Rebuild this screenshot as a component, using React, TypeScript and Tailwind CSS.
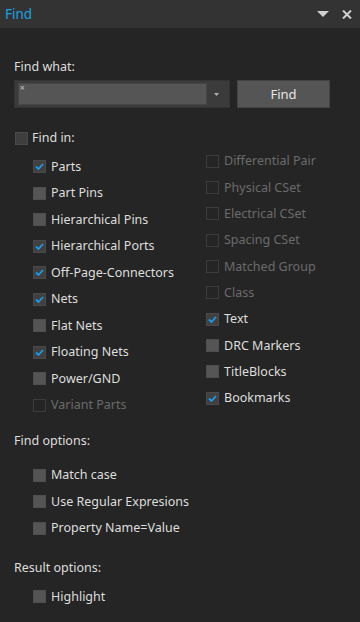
import React from "react";

type State = "on" | "off" | "dis" | "mixed";

function Box({ s }: { s: State }) {
  if (s === "dis")
    return <div className="w-[13px] h-[13px] shrink-0 border border-[#3c3c3c]" />;
  if (s === "mixed")
    return <div className="w-[13px] h-[13px] shrink-0 border border-[#4a4a4a] bg-[#3e3e3e]" />;
  if (s === "off")
    return <div className="w-[13px] h-[13px] shrink-0 border border-[#4e4e4e] bg-[#555555]" />;
  return (
    <div className="w-[13px] h-[13px] shrink-0 border border-[#4a4a4a] bg-[#404040] flex items-center justify-center">
      <svg width="11" height="11" viewBox="0 0 11 11">
        <polyline points="2,5.5 4.5,8 9,3" fill="none" stroke="#1e9be8" strokeWidth="1.8" />
      </svg>
    </div>
  );
}

function Row({ label, s, h = "h-[26.5px]" }: { label: string; s: State; h?: string }) {
  return (
    <div className={`${h} flex items-center gap-[5px]`}>
      <Box s={s} />
      <span className={s === "dis" ? "text-[#6b6b6b]" : "text-[#dedede]"}>{label}</span>
    </div>
  );
}

const left: [string, State][] = [
  ["Parts", "on"],
  ["Part Pins", "off"],
  ["Hierarchical Pins", "off"],
  ["Hierarchical Ports", "on"],
  ["Off-Page-Connectors", "on"],
  ["Nets", "on"],
  ["Flat Nets", "off"],
  ["Floating Nets", "on"],
  ["Power/GND", "off"],
  ["Variant Parts", "dis"],
];

const right: [string, State][] = [
  ["Differential Pair", "dis"],
  ["Physical CSet", "dis"],
  ["Electrical CSet", "dis"],
  ["Spacing CSet", "dis"],
  ["Matched Group", "dis"],
  ["Class", "dis"],
  ["Text", "on"],
  ["DRC Markers", "off"],
  ["TitleBlocks", "off"],
  ["Bookmarks", "on"],
];

export default function App() {
  return (
    <div
      className="w-[360px] h-[622px] bg-[#252525] flex flex-col text-[12.5px] leading-[16px] overflow-hidden"
      style={{ fontFamily: '"Noto Sans", "Open Sans", sans-serif' }}
    >
      <div className="h-[28px] shrink-0 bg-[#333333] flex items-center justify-between pl-[5px] pr-[8px]">
        <span className="text-[13.5px] text-[#1ba1e2]">Find</span>
        <div className="flex items-center gap-[13px]">
          <svg width="12" height="6" viewBox="0 0 12 6">
            <polygon points="0,0 12,0 6,6" fill="#d0d0d0" />
          </svg>
          <svg width="10" height="9" viewBox="0 0 10 9">
            <path d="M1 0.5 L9 8.5 M9 0.5 L1 8.5" stroke="#d0d0d0" strokeWidth="2" />
          </svg>
        </div>
      </div>

      <div className="flex flex-col pl-[14px]">
        <div className="mt-[31px] h-[16px] text-[#dedede]">Find what:</div>

        <div className="mt-[5px] flex gap-[7px]">
          <div className="w-[216px] h-[28px] bg-[#3b3b3b] border border-[#333333] flex items-center pl-[3px] pr-[3px]">
            <div className="w-[189px] h-[22px] bg-[#555555] border border-[#464646] relative">
              <span className="absolute left-[1px] top-[-4px] text-[8px] text-[#cfcfcf]">×</span>
            </div>
            <div className="flex-1 flex justify-center">
              <svg width="5" height="3" viewBox="0 0 5 3">
                <polygon points="0,0 5,0 2.5,3" fill="#b0b0b0" />
              </svg>
            </div>
          </div>
          <div className="w-[93px] h-[28px] bg-[#555555] border border-[#444444] flex items-center justify-center text-[13px] text-[#e6e6e6]">
            Find
          </div>
        </div>

        <div className="mt-[22px] h-[16px] flex items-center gap-[4px] pl-[1px]">
          <Box s="mixed" />
          <span className="text-[#dedede]">Find in:</span>
        </div>

        <div className="flex pl-[19px]">
          <div className="w-[173px] flex flex-col pt-[7.5px]">
            {left.map(([l, s]) => (
              <Row key={l} label={l} s={s} />
            ))}
          </div>
          <div className="flex flex-col pt-[2px]">
            {right.map(([l, s]) => (
              <Row key={l} label={l} s={s} h="h-[26.35px]" />
            ))}
          </div>
        </div>

        <div className="mt-[14.5px] h-[16px] text-[#dedede]">Find options:</div>
        <div className="mt-[13px] flex flex-col pl-[19px]">
          <Row label="Match case" s="off" />
          <Row label="Use Regular Expresions" s="off" />
          <Row label="Property Name=Value" s="off" />
        </div>

        <div className="mt-[18.5px] h-[16px] text-[#dedede]">Result options:</div>
        <div className="mt-[7.5px] flex flex-col pl-[19px]">
          <Row label="Highlight" s="off" />
        </div>
      </div>
    </div>
  );
}
